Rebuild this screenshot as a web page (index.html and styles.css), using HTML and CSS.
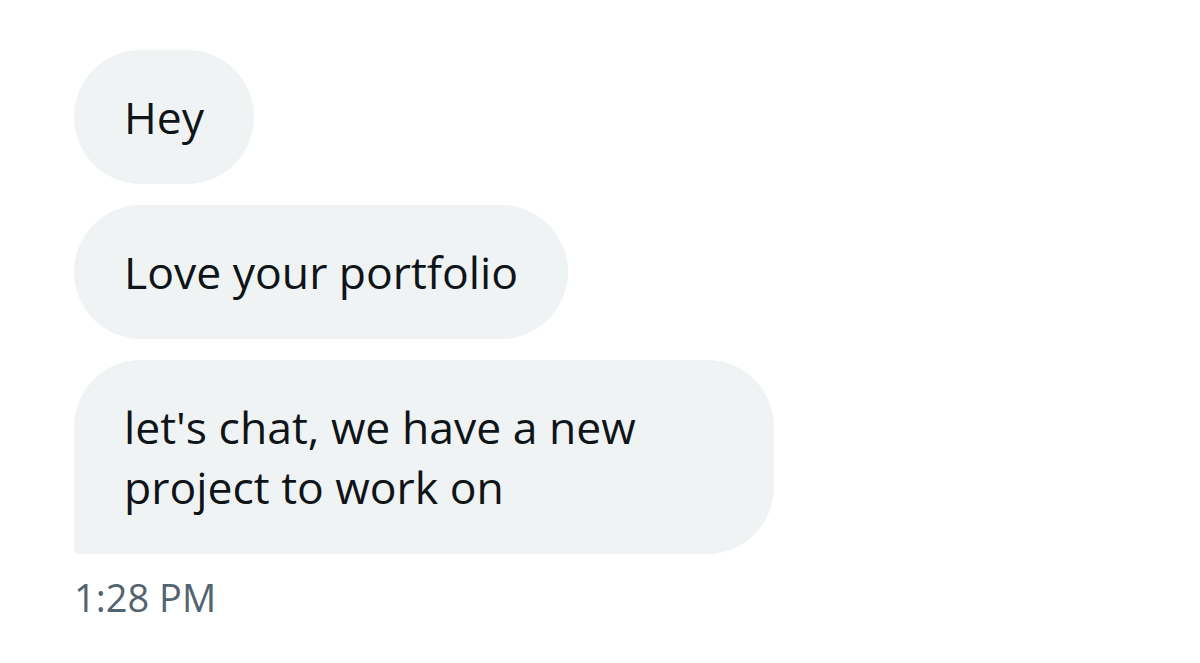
FILE: index.html
```html
<!DOCTYPE html>
<html lang="en">
<head>
    <meta charset="UTF-8">
    <meta name="viewport" content="width=device-width, initial-scale=1.0">
    <title>Messages</title>
    <link rel="stylesheet" href="styles.css">
</head>
<body>
    <div class="thread">
        <div class="bubble">Hey</div>
        <div class="bubble">Love your portfolio</div>
        <div class="bubble last">let's chat, we have a new project to work on</div>
        <div class="time">1:28 PM</div>
    </div>
</body>
</html>
```

FILE: styles.css
```css
body {
    margin: 0;
    background: #ffffff;
    font-family: "Open Sans", "Noto Sans", Arial, sans-serif;
    color: #0f1419;
}
.thread {
    display: flex;
    flex-direction: column;
    align-items: flex-start;
    gap: 21px;
    padding: 50px 0 0 74px;
}
.bubble {
    background: #eff3f4;
    border-radius: 67px;
    padding: 37px 50px;
    font-size: 44.5px;
    line-height: 60px;
    max-width: 600px;
}
.bubble.last {
    border-bottom-left-radius: 5px;
}
.time {
    margin-top: 0;
    font-size: 38px;
    line-height: 44px;
    color: #536471;
}
```
